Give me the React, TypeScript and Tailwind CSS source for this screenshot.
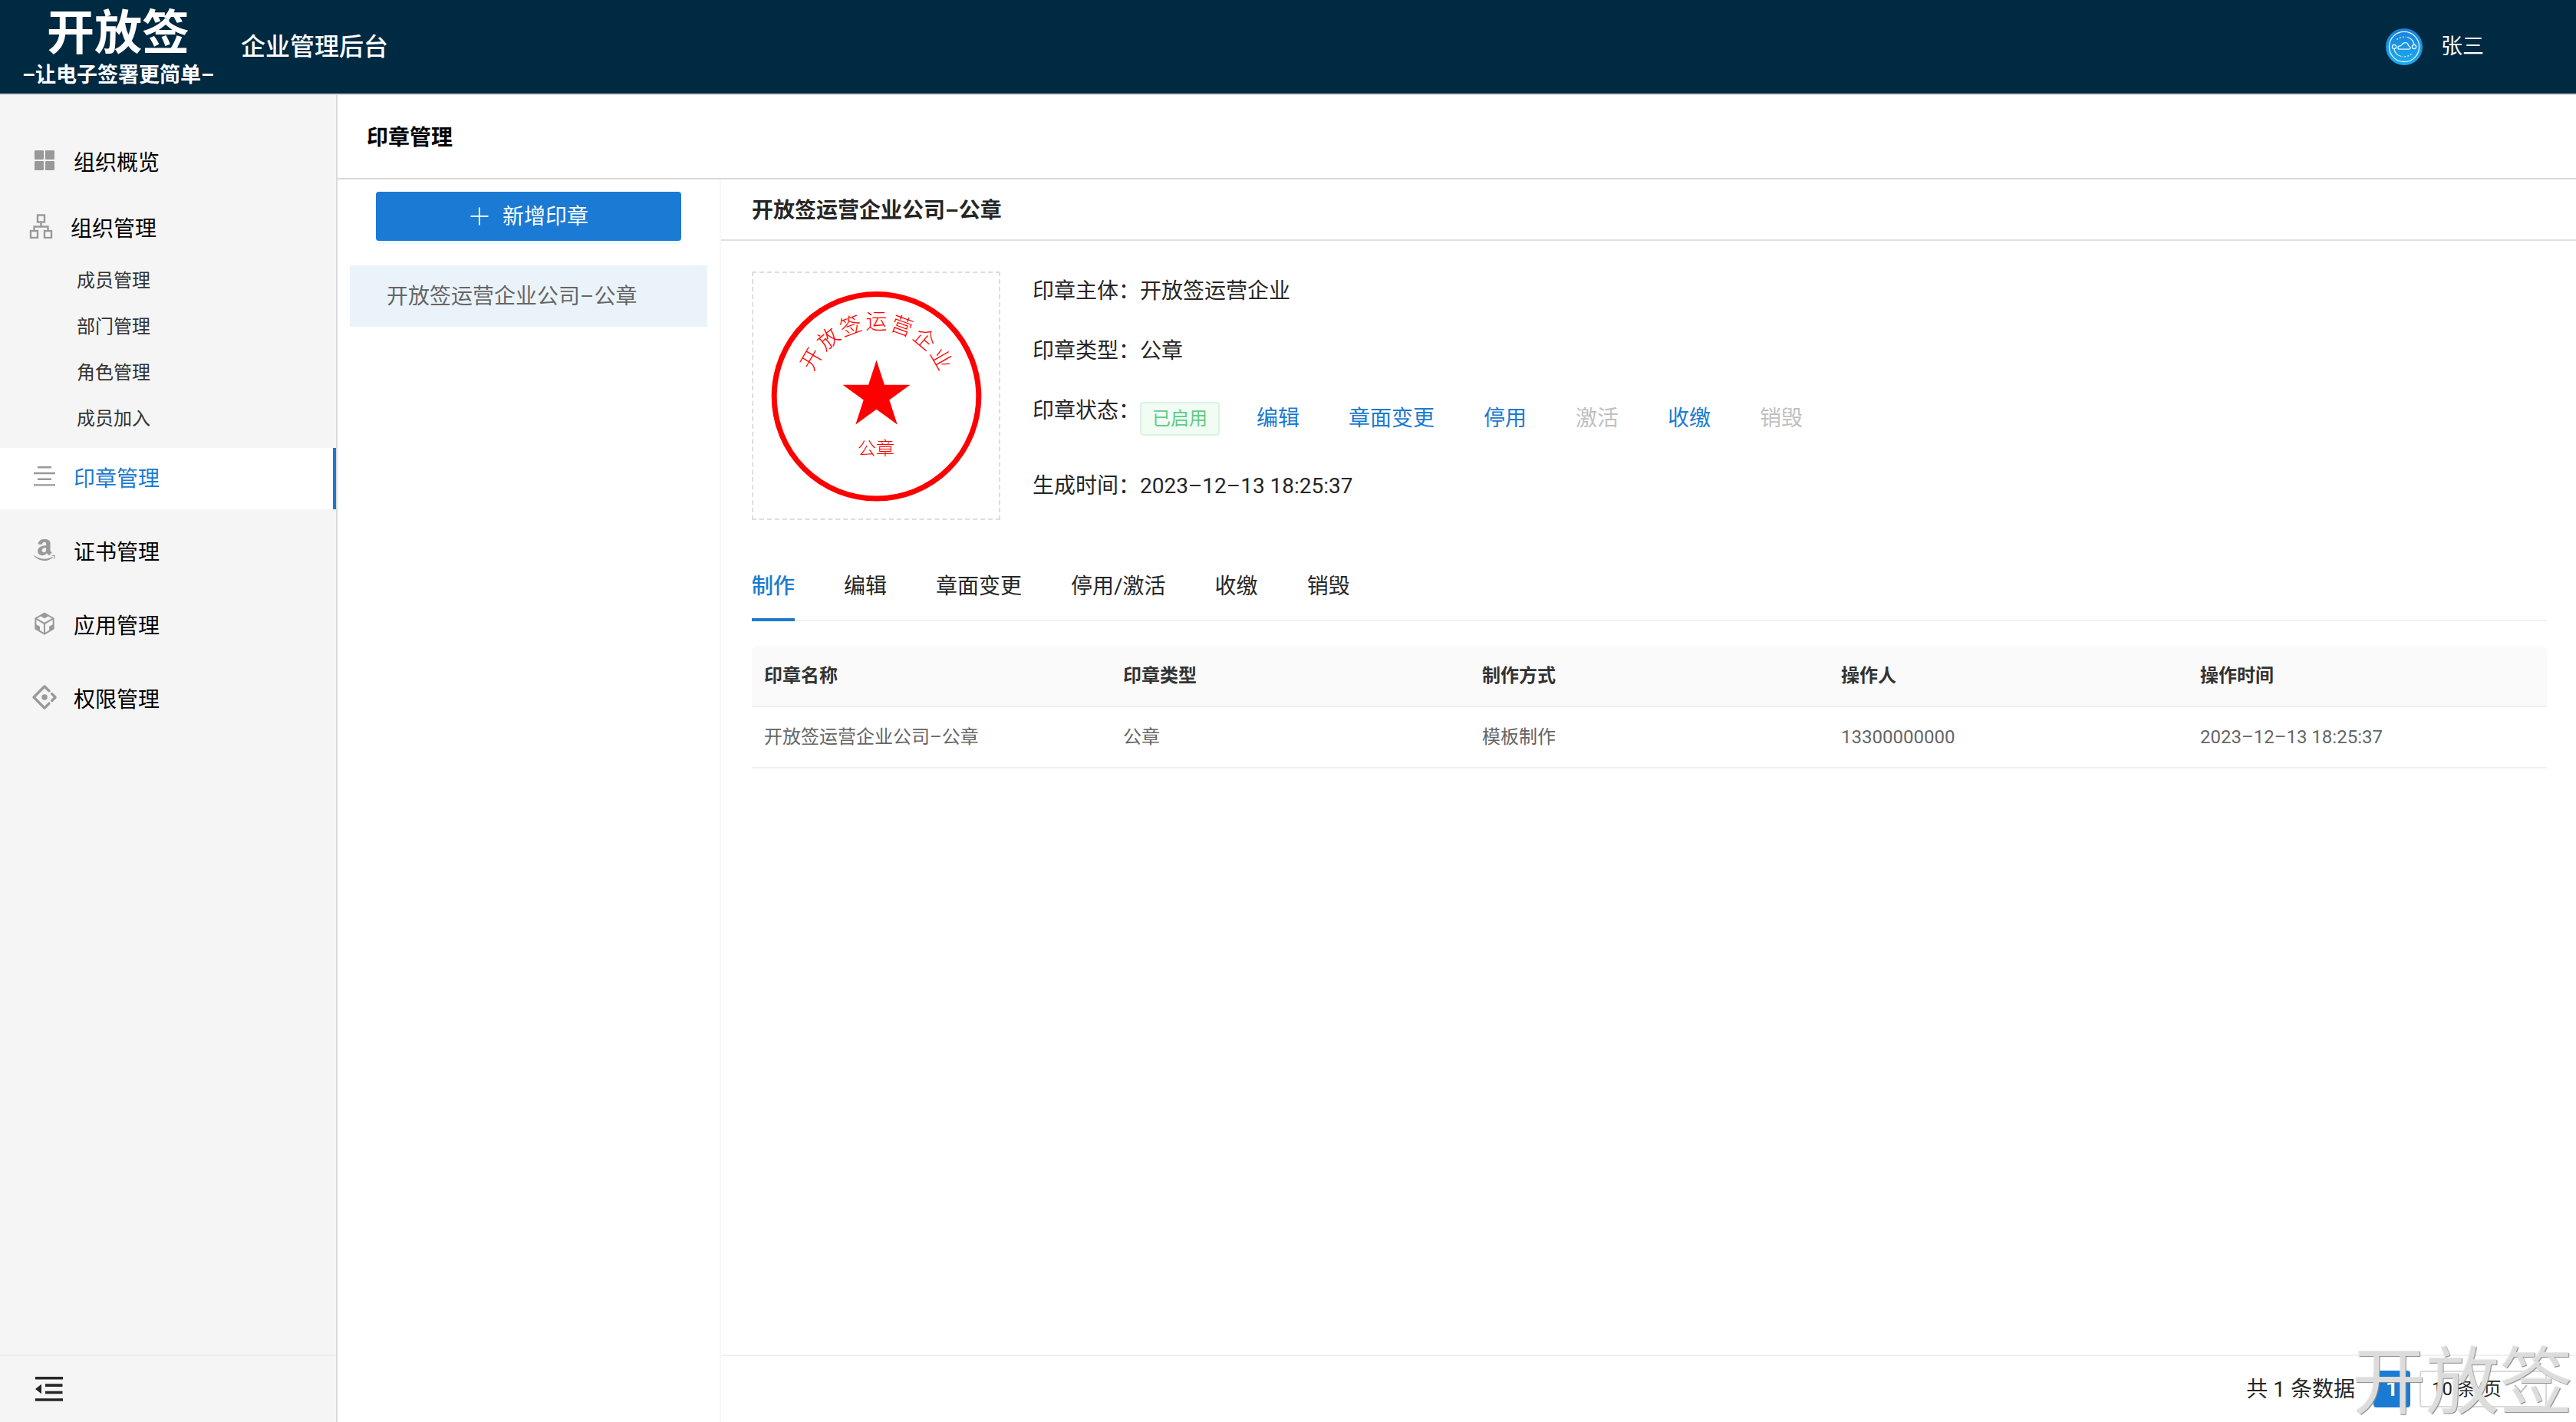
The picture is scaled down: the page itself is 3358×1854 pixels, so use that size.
import React, { ReactNode } from "react";
import { AiOutlineAmazon, AiOutlineAntDesign, AiOutlineCodeSandbox } from "react-icons/ai";
import clsx from "clsx";

const GridIcon = () => (
  <svg viewBox="0 0 32 32" className="w-8 h-8" fill="currentColor">
    <rect x="3" y="3" width="12" height="12" rx="1" />
    <rect x="17" y="3" width="12" height="12" rx="1" />
    <rect x="3" y="17" width="12" height="12" rx="1" />
    <rect x="17" y="17" width="12" height="12" rx="1" />
  </svg>
);

const OrgIcon = () => (
  <svg viewBox="0 0 32 32" className="w-8 h-8" fill="none" stroke="currentColor" strokeWidth="2.400">
    <rect x="11" y="1.500" width="9" height="9" />
    <rect x="2" y="22" width="9" height="9" />
    <rect x="20" y="22" width="9" height="9" />
    <path d="M15.500 10.500v6M6.500 22v-5.500h18v5.500" />
  </svg>
);

const LinesIcon = () => (
  <svg viewBox="0 0 32 32" className="w-8 h-8" fill="currentColor">
    <path d="M7 3h18v2.500H7zM2 10.800h28v2.400H2zM7 18.500h18V21H7zM2 26.200h28v2.400H2z" />
  </svg>
);

const FoldIcon = () => (
  <svg viewBox="0 0 36 32" className="w-9 h-8" fill="currentColor">
    <path d="M0 0h36v3.600H0zM13 9.300h22.500v3.600H13zM13 18.700h22.500v3.600H13zM0 28.200h36v3.600H0zM0 16l8-6.200v12.400z" />
  </svg>
);

const PlusIcon = () => (
  <svg viewBox="0 0 28 28" className="w-7 h-7" stroke="currentColor" strokeWidth="2">
    <path d="M14 2.500v23M2.500 14h23" />
  </svg>
);

const Avatar = () => (
  <svg viewBox="0 0 48 48" className="w-12 h-12" fill="none" stroke="#e6f7ff" strokeWidth="1.300">
    <defs>
      <linearGradient id="avatarBg" x1="0" y1="0" x2="0" y2="1">
        <stop offset="0" stopColor="#1a80d9" />
        <stop offset="1" stopColor="#1badf0" />
      </linearGradient>
    </defs>
    <circle cx="24" cy="24" r="24" fill="url(#avatarBg)" stroke="none" />
    <circle cx="24" cy="24" r="19.600" />
    <circle cx="11" cy="24" r="2.600" />
    <circle cx="37" cy="24" r="2.600" />
    <path d="M28 11.500c5 1.500 8.500 5.200 9 9.800M20 36.500c-5-1.500-8.500-5.200-9-9.800" />
    <path d="M14.500 14.500c3.500-2.800 8-3.800 12-3.200M33.500 33.500c-3.500 2.800-8 3.800-12 3.200" strokeDasharray="1.800 2.200" />
    <path d="M18 27.200c-2.800 0-2.800-4 0-4.200 1.600-.2 2.200-.6 3-1.600 2.200-4 7.500-3.600 8.200 0 .2 1.200.8 1.600 1.800 2.200 1.800 1 1.200 3.600-.8 3.600z" />
  </svg>
);

const SEAL_CHARS = ["开", "放", "签", "运", "营", "企", "业"];

const Seal = () => (
  <svg viewBox="0 0 320 320" className="w-full h-full" fill="#f00">
    <circle cx="160.500" cy="160.700" r="133.300" fill="none" stroke="#f00" strokeWidth="7" />
    <polygon points="160.500,113.500 187.700,197.500 116.500,145.700 204.500,145.700 133.300,197.500" />
    {SEAL_CHARS.map((char, i) => (
      <text
        key={char}
        x="160.500"
        y="73"
        textAnchor="middle"
        transform={`rotate(${(i - 3) * 20} 160.500 160.700)`}
        className="text-[28px] font-light"
      >
        {char}
      </text>
    ))}
    <text x="160" y="237" textAnchor="middle" className="text-2xl font-light">
      公章
    </text>
  </svg>
);

const MenuItem = ({ icon, label, active }: { icon: ReactNode; label: string; active?: boolean }) => (
  <a
    href="#"
    className={clsx(
      "flex items-center h-20 pl-10 pt-0.5 gap-5",
      active ? "bg-white border-r-4 border-[#1b7ad0] text-[#1b7ad0]" : "text-black"
    )}
  >
    <span className="flex justify-center w-9 pb-2 text-[#999]">{icon}</span>
    {label}
  </a>
);

const SUB_MENU = ["成员管理", "部门管理", "角色管理", "成员加入"];

const Sidebar = () => (
  <aside className="flex flex-col w-[440px] shrink-0 bg-[#f5f5f5] border-r-2 border-[#d9d9d9]">
    <nav className="flex-1 pt-12">
      <MenuItem icon={<GridIcon />} label="组织概览" />
      <a href="#" className="flex items-center h-20 mt-1 pt-1.5 pl-[38px] gap-[22px] text-black">
        <span className="pb-2 text-[#999]">
          <OrgIcon />
        </span>
        组织管理
      </a>
      <ul className="mb-2 text-2xl text-[#333]">
        {SUB_MENU.map((item) => (
          <li key={item}>
            <a href="#" className="flex items-center h-[60px] pl-[100px]">
              {item}
            </a>
          </li>
        ))}
      </ul>
      <div className="flex flex-col gap-4">
        <MenuItem icon={<LinesIcon />} label="印章管理" active />
        <MenuItem icon={<AiOutlineAmazon className="w-9 h-9" />} label="证书管理" />
        <MenuItem icon={<AiOutlineCodeSandbox className="w-9 h-9" />} label="应用管理" />
        <MenuItem icon={<AiOutlineAntDesign className="w-9 h-9" />} label="权限管理" />
      </div>
    </nav>
    <div className="flex items-center h-[88px] px-[46px] border-t-2 border-[#ececec]">
      <button aria-label="收起菜单">
        <FoldIcon />
      </button>
    </div>
  </aside>
);

const Header = () => (
  <header className="flex items-center h-[124px] pl-7 pr-[120px] bg-[#002942] border-b-2 border-[#d9d9d9] text-white">
    <div className="flex flex-col items-center w-[252px] pt-0.5 font-bold">
      <span className="text-[62px] leading-[72px]">开放签</span>
      <span className="text-[27px] leading-9">–让电子签署更简单–</span>
    </div>
    <h1 className="ml-[34px] text-[32px] font-medium">企业管理后台</h1>
    <div className="flex items-center gap-6 ml-auto">
      <Avatar />
      张三
    </div>
  </header>
);

const Field = ({ label, children }: { label: string; children: ReactNode }) => (
  <div className="flex items-start leading-11">
    <dt className="w-[140px] shrink-0 whitespace-nowrap">{label}：</dt>
    <dd>{children}</dd>
  </div>
);

const ACTIONS = [
  { label: "编辑" },
  { label: "章面变更" },
  { label: "停用" },
  { label: "激活", disabled: true },
  { label: "收缴" },
  { label: "销毁", disabled: true },
];

const TABS = ["制作", "编辑", "章面变更", "停用/激活", "收缴", "销毁"];

const COLUMNS = ["印章名称", "印章类型", "制作方式", "操作人", "操作时间"];

const ROWS = [["开放签运营企业公司–公章", "公章", "模板制作", "13300000000", "2023–12–13 18:25:37"]];

const SealDetail = () => (
  <section className="flex flex-col flex-1 min-w-0">
    <h3 className="flex items-center h-20 pl-10 pt-1 border-b-2 border-[#e0e0e0] font-bold">
      开放签运营企业公司–公章
    </h3>
    <div className="flex-1 pl-10 pr-[38px] pt-10">
      <div className="flex gap-[42px]">
        <div className="w-[324px] h-[324px] shrink-0 border-2 border-dashed border-[#ddd]">
          <Seal />
        </div>
        <dl className="flex flex-col gap-[34px] pt-1">
          <Field label="印章主体">开放签运营企业</Field>
          <Field label="印章类型">公章</Field>
          <Field label="印章状态">
            <div className="flex items-center h-16">
              <span className="flex items-center h-11 px-3.5 border-2 border-[#dcf3e4] rounded bg-[#f0fcf4] text-2xl text-[#5fcb87]">
                已启用
              </span>
              <div className="flex gap-16 ml-12">
                {ACTIONS.map(({ label, disabled }) => (
                  <button key={label} disabled={disabled} className="text-[#1b7ad0] disabled:text-[#bfbfbf]">
                    {label}
                  </button>
                ))}
              </div>
            </div>
          </Field>
          <Field label="生成时间">2023–12–13 18:25:37</Field>
        </dl>
      </div>

      <div role="tablist" className="flex gap-16 mt-10 border-b-2 border-[#f0f0f0]">
        {TABS.map((tab, i) => (
          <button
            key={tab}
            role="tab"
            aria-selected={i === 0}
            className={clsx(
              "h-[92px] -mb-0.5 pt-1.5 border-b-4",
              i === 0
                ? "border-[#1b7ad0] text-[#1b7ad0] [text-shadow:0_0_1px_currentColor]"
                : "border-transparent"
            )}
          >
            {tab}
          </button>
        ))}
      </div>

      <table className="w-full mt-8 table-fixed border-separate border-spacing-0 text-2xl text-left">
        <thead>
          <tr>
            {COLUMNS.map((col) => (
              <th
                key={col}
                className="h-20 px-4 bg-[#fafafa] border-b-2 border-[#f0f0f0] font-bold text-[#333] first:rounded-tl-lg last:rounded-tr-lg"
              >
                {col}
              </th>
            ))}
          </tr>
        </thead>
        <tbody>
          {ROWS.map((row) => (
            <tr key={row[3]}>
              {row.map((cell) => (
                <td key={cell} className="h-20 px-4 border-b-2 border-[#f0f0f0] text-[#666]">
                  {cell}
                </td>
              ))}
            </tr>
          ))}
        </tbody>
      </table>
    </div>

    <footer className="flex items-center justify-end h-[88px] pr-[38px] border-t-2 border-[#f0f0f0]">
      <span className="pt-0.5">共 1 条数据</span>
      <button className="w-12 h-12 ml-6 mr-3 rounded bg-[#1b7ad3] text-white font-bold">1</button>
      <div className="relative">
        <select
          aria-label="每页条数"
          className="w-[166px] h-12 pl-3.5 border-2 border-[#d9d9d9] rounded bg-white appearance-none text-2xl"
        >
          <option>10 条/页</option>
        </select>
        <svg
          viewBox="0 0 20 12"
          className="absolute right-6 top-[18px] w-5 h-3"
          fill="none"
          stroke="#bfbfbf"
          strokeWidth="2"
        >
          <path d="M2 1l8 9 8-9" />
        </svg>
      </div>
    </footer>
  </section>
);

export default function App() {
  return (
    <div className="relative flex flex-col min-h-screen bg-white text-[28px] leading-11 text-[#262626] font-[Roboto,'Noto_Sans_CJK_SC',sans-serif]">
      <Header />
      <div className="flex flex-1">
        <Sidebar />
        <main className="flex flex-col flex-1 min-w-0">
          <h2 className="flex items-center h-[110px] pl-[38px] pt-1 border-b-2 border-[#d9d9d9] font-bold text-black">
            印章管理
          </h2>
          <div className="flex flex-1">
            <div className="w-[500px] shrink-0 pt-4 border-r-2 border-[#f7f7f7]">
              <button className="flex items-center justify-center gap-4 w-[398px] h-16 mx-auto rounded bg-[#1b7ad3] text-white shadow-[0_4px_0_rgba(5,145,255,0.06)]">
                <PlusIcon />
                <span className="pt-0.5">新增印章</span>
              </button>
              <ul className="mt-8 mx-4">
                <li>
                  <a href="#" className="flex items-center h-20 pl-12 pt-0.5 bg-[#ebf3fa] text-[#666]">
                    开放签运营企业公司–公章
                  </a>
                </li>
              </ul>
            </div>
            <SealDetail />
          </div>
        </main>
      </div>

      {/* Brand watermark */}
      <div className="absolute right-1 bottom-1 text-8xl leading-none text-[#e6e6e6]/90 pointer-events-none [text-shadow:1px_1px_1px_#888]">
        开放签
      </div>
    </div>
  );
}
